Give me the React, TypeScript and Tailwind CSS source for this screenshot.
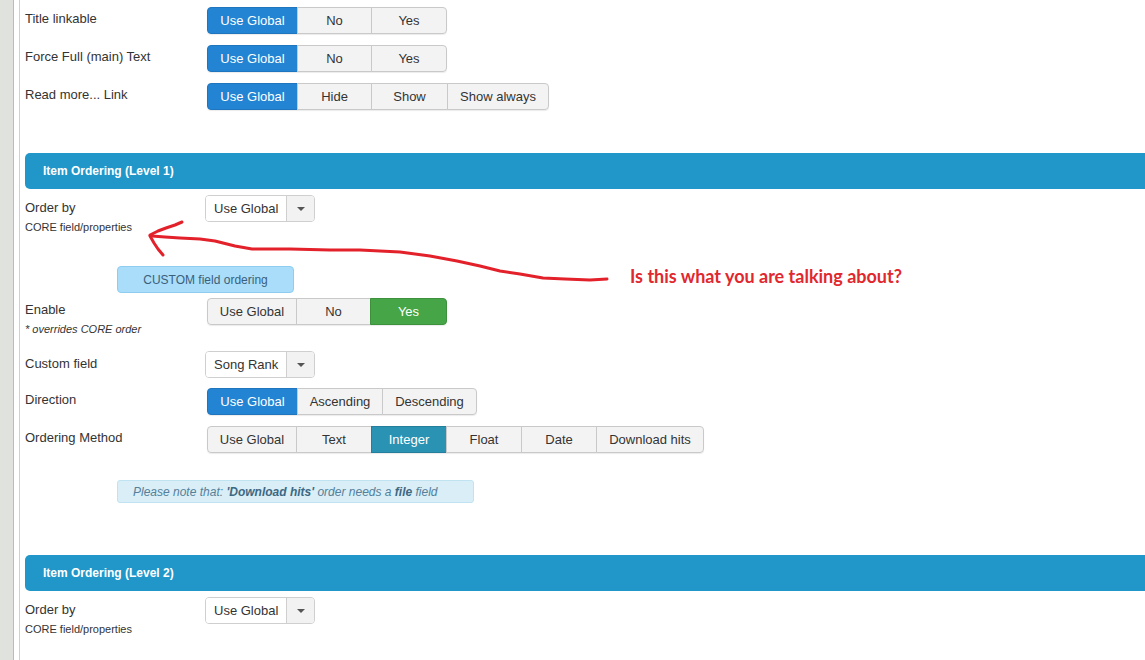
import React from 'react';

type Opt = { label: string; w: number; active?: 'blue' | 'green' | 'teal' };

const activeCls = {
  blue: 'bg-[#2384d3] border-[#1f76be] text-white',
  green: 'bg-[#46a546] border-[#3d913d] text-white',
  teal: 'bg-[#2a93b4] border-[#247f9c] text-white',
};

function Group({ opts }: { opts: Opt[] }) {
  return (
    <div className="flex h-[27px] shadow-[0_1px_1px_rgba(0,0,0,0.08)] rounded-[4px]">
      {opts.map((o, i) => (
        <div
          key={o.label}
          style={{ width: o.w }}
          className={`flex items-center justify-center border text-[13px] leading-none ${i > 0 ? '-ml-px' : ''} ${
            i === 0 ? 'rounded-l-[4px]' : ''
          } ${i === opts.length - 1 ? 'rounded-r-[4px]' : ''} ${
            o.active ? activeCls[o.active] : 'bg-[#f3f3f3] border-[#c9c9c9] text-[#333]'
          }`}
        >
          {o.label}
        </div>
      ))}
    </div>
  );
}

function Select({ value, w }: { value: string; w: number }) {
  return (
    <div className="flex h-[27px] -ml-[2px] border border-[#cfcfcf] rounded-[4px] overflow-hidden" style={{ width: w }}>
      <div className="flex-1 flex items-center pl-[8px] text-[13px] text-[#333] bg-white">{value}</div>
      <div className="w-[28px] flex items-center justify-center bg-[#f2f2f2] border-l border-[#cfcfcf]">
        <div className="w-0 h-0 border-l-[4px] border-r-[4px] border-t-[4px] border-l-transparent border-r-transparent border-t-[#555]" />
      </div>
    </div>
  );
}

function Row({ label, sub, subItalic, pt, mt, children }: { label: string; sub?: string; subItalic?: boolean; pt: number; mt: number; children: React.ReactNode }) {
  return (
    <div className="flex items-start" style={{ marginTop: mt }}>
      <div className="w-[182px] shrink-0" style={{ paddingTop: pt }}>
        <div className="text-[13px] leading-[18px] text-[#333]">{label}</div>
        {sub && (
          <div className={`text-[11px] leading-[14px] mt-[3px] text-[#333] ${subItalic ? 'italic' : ''}`}>{sub}</div>
        )}
      </div>
      {children}
    </div>
  );
}

function Header({ title, mt }: { title: string; mt: number }) {
  return (
    <div
      className="h-[36px] -mr-[40px] rounded-l-[5px] bg-[#2196c9] flex items-center pl-[18px] text-[12px] font-bold text-white"
      style={{ marginTop: mt }}
    >
      {title}
    </div>
  );
}

export default function App() {
  return (
    <div className="relative w-[1145px] h-[660px] overflow-hidden bg-white flex" style={{ fontFamily: '"Liberation Sans", Arial, sans-serif' }}>
      <div className="w-[14px] shrink-0 bg-[#e0e2dd] border-r border-[#b9bdb7]" />
      <div className="w-[6px] shrink-0 border-r border-[#cfd1cd]" />
      <div className="flex-1 pl-[5px] pt-[7px]">
        <Row label="Title linkable" pt={3} mt={0}>
          <Group opts={[{ label: 'Use Global', w: 91, active: 'blue' }, { label: 'No', w: 75 }, { label: 'Yes', w: 76 }]} />
        </Row>
        <Row label="Force Full (main) Text" pt={3} mt={11}>
          <Group opts={[{ label: 'Use Global', w: 91, active: 'blue' }, { label: 'No', w: 75 }, { label: 'Yes', w: 76 }]} />
        </Row>
        <Row label="Read more... Link" pt={3} mt={11}>
          <Group
            opts={[
              { label: 'Use Global', w: 91, active: 'blue' },
              { label: 'Hide', w: 75 },
              { label: 'Show', w: 77 },
              { label: 'Show always', w: 102 },
            ]}
          />
        </Row>

        <Header title="Item Ordering (Level 1)" mt={43} />

        <Row label="Order by" sub="CORE field/properties" pt={4} mt={6}>
          <Select value="Use Global" w={110} />
        </Row>

        <div className="mt-[32px] ml-[92px] w-[177px] h-[27px] rounded-[4px] bg-[#a9ddfa] border border-[#8fcdf0] flex items-center justify-center text-[12px] text-[#3b5f7a]">
          CUSTOM field ordering
        </div>

        <Row label="Enable" sub="* overrides CORE order" subItalic pt={3} mt={5}>
          <Group opts={[{ label: 'Use Global', w: 90 }, { label: 'No', w: 75 }, { label: 'Yes', w: 77, active: 'green' }]} />
        </Row>
        <Row label="Custom field" pt={4} mt={15}>
          <Select value="Song Rank" w={110} />
        </Row>
        <Row label="Direction" pt={3} mt={10}>
          <Group
            opts={[
              { label: 'Use Global', w: 91, active: 'blue' },
              { label: 'Ascending', w: 86 },
              { label: 'Descending', w: 95 },
            ]}
          />
        </Row>
        <Row label="Ordering Method" pt={3} mt={11}>
          <Group
            opts={[
              { label: 'Use Global', w: 90 },
              { label: 'Text', w: 76 },
              { label: 'Integer', w: 76, active: 'teal' },
              { label: 'Float', w: 76 },
              { label: 'Date', w: 76 },
              { label: 'Download hits', w: 108 },
            ]}
          />
        </Row>

        <div className="mt-[27px] ml-[92px] w-[357px] h-[23px] rounded-[3px] bg-[#d9eef7] border border-[#bfe3f0] flex items-center pl-[15px] text-[12px] italic text-[#54809a]">
          <span>Please note that:&nbsp;</span>
          <b className="text-[#3d6882]">'Download hits'</b>
          <span>&nbsp;order needs a&nbsp;</span>
          <b className="text-[#3d6882]">file</b>
          <span>&nbsp;field</span>
        </div>

        <Header title="Item Ordering (Level 2)" mt={52} />

        <Row label="Order by" sub="CORE field/properties" pt={4} mt={6}>
          <Select value="Use Global" w={110} />
        </Row>
      </div>

      <svg className="absolute left-0 top-0 pointer-events-none" width="1145" height="660">
        <g fill="none" stroke="#e3212a" strokeWidth="3" strokeLinecap="round" strokeLinejoin="round">
          <polyline points="607,279 590,280 565,279 543,278 520,274 500,271 480,266 457,261 430,256 400,252 360,250 330,250 290,249 252,249 235,246 215,241 200,239 180,238 165,237 152,236" />
          <polyline points="150,235 158,231 166,228 175,225 182,222" />
          <polyline points="150,236 154,243 158,249 163,255" />
        </g>
      </svg>
      <div
        className="absolute left-[630px] top-[265px] text-[18px] leading-[22px] font-bold text-[#e0282e] whitespace-nowrap"
        style={{ fontFamily: 'Lato, "Open Sans", sans-serif' }}
      >
        Is this what you are talking about?
      </div>
    </div>
  );
}
